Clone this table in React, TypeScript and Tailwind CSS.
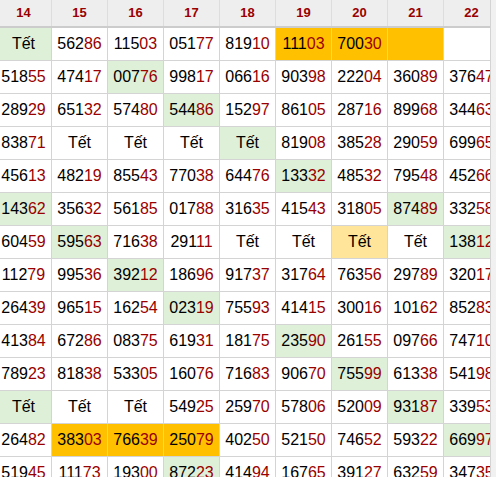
import React from "react";

type Cell = { v: string; c?: "g" | "o" | "y" };

const raw: string[][] = [
  ["Tết:g", "56286", "11503", "05177", "81910", "11103:o", "70030:o", ":o", ""],
  ["51855", "47417", "00776:g", "99817", "06616", "90398", "22204", "36089", "37647"],
  ["28929", "65132", "57480", "54486:g", "15297", "86105", "28716", "89968", "34463"],
  ["83871", "Tết", "Tết", "Tết", "Tết:g", "81908", "38528", "29059", "69965"],
  ["45613", "48219", "85543", "77038", "64476", "13332:g", "48532", "79548", "45266"],
  ["14362:g", "35632", "56185", "01788", "31635", "41543", "31805", "87489:g", "33258"],
  ["60459", "59563:g", "71638", "29111", "Tết", "Tết", "Tết:y", "Tết", "13812:g"],
  ["11279", "99536", "39212:g", "18696", "91737", "31764", "76356", "29789", "32017"],
  ["26439", "96515", "16254", "02319:g", "75593", "41415", "30016", "10162", "85283"],
  ["41384", "67286", "08375", "61931", "18175", "23590:g", "26155", "09766", "74710"],
  ["78923", "81838", "53305", "16076", "71683", "90670", "75599:g", "61338", "54198"],
  ["Tết:g", "Tết", "Tết", "54925", "25970", "57806", "52009", "93187:g", "33953"],
  ["26482", "38303:o", "76639:o", "25079:o", "40250", "52150", "74652", "59322", "66997:g"],
  ["51945", "11173", "19300", "87223:g", "41494", "16765", "39127", "63259", "34735"],
];

const rows: Cell[][] = raw.map((r) =>
  r.map((s) => {
    const [v, c] = s.split(":");
    return { v, c: c as Cell["c"] };
  })
);

const headers = ["14", "15", "16", "17", "18", "19", "20", "21", "22"];

function bgClass(c?: Cell["c"]) {
  if (c === "g") return "bg-[#dff0d8]";
  if (c === "o") return "bg-[#ffc000]";
  if (c === "y") return "bg-[#ffe599]";
  return "bg-white";
}

function Value({ v }: { v: string }) {
  if (/^\d{5}$/.test(v)) {
    return (
      <span>
        <span className="text-black">{v.slice(0, 3)}</span>
        <span className="text-[#990000]">{v.slice(3)}</span>
      </span>
    );
  }
  return <span className="text-black">{v}</span>;
}

export default function App() {
  return (
    <div
      className="flex w-[496px] h-[477px] overflow-hidden bg-white"
      style={{ fontFamily: '"Liberation Sans", Arial, sans-serif' }}
    >
      <div className="w-[490px] h-[477px] overflow-hidden shrink-0">
        <div className="flex flex-col ml-[-4px] w-max">
          <div className="flex h-[28px] bg-[#eeeeee] border-b-2 border-b-[#cccccc]">
            {headers.map((h) => (
              <div
                key={h}
                className="w-[56px] shrink-0 flex items-center justify-center border-r border-r-[#dddddd] text-[13px] font-bold text-[#990000]"
              >
                {h}
              </div>
            ))}
          </div>
          {rows.map((r, i) => (
            <div key={i} className="flex h-[33px]">
              {r.map((cell, j) => (
                <div
                  key={j}
                  className={`w-[56px] shrink-0 flex items-center justify-center border-r border-b border-[#d4d4d4] text-[16px] whitespace-nowrap overflow-visible ${bgClass(cell.c)}`}
                >
                  <Value v={cell.v} />
                </div>
              ))}
            </div>
          ))}
        </div>
      </div>
      <div className="w-[6px] h-[477px] bg-[#f1f1f1] border-l border-l-[#d4d4d4]" />
    </div>
  );
}
